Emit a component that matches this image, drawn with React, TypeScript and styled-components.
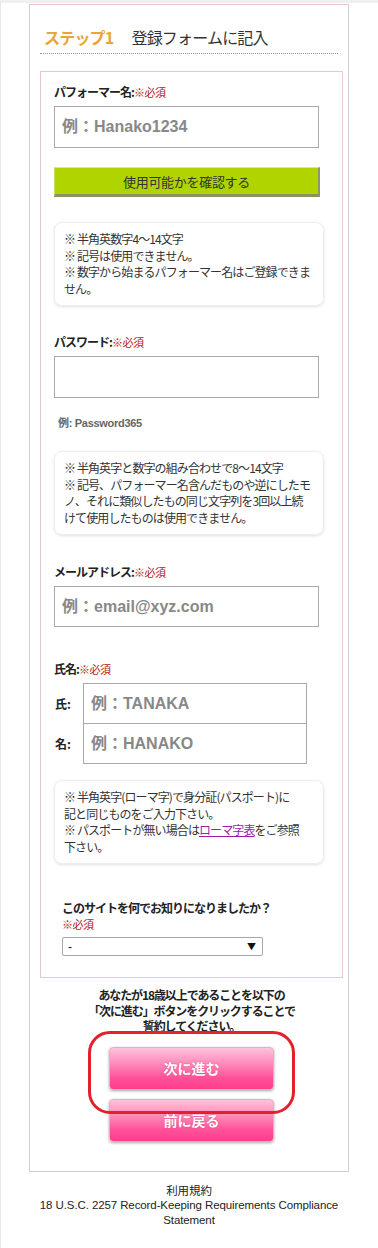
import React from 'react';
import styled, { createGlobalStyle } from 'styled-components';

const JP = `"Noto Sans CJK JP", "Noto Sans", sans-serif`;
const LATIN_JP = `"Liberation Sans", "Noto Sans CJK JP", sans-serif`;

const GlobalStyle = createGlobalStyle`
  html, body {
    margin: 0;
    padding: 0;
    background: #fff;
  }
  body {
    font-family: ${JP};
    color: #222;
  }
  * {
    box-sizing: border-box;
  }
`;

const Page = styled.div`
  width: 378px;
  min-height: 1248px;
  border-top: 3px solid #f0f0f0;
  border-left: 1px solid #e8e8e8;
  padding-left: 28px;
`;

const Card = styled.section`
  margin-top: 1px;
  width: 320px;
  border: 1px solid #cfcfcf;
  border-top-color: #e6c3d6;
  padding: 0 5px 29px 10px;
`;

const Heading = styled.h1`
  margin: 0;
  padding: 22px 0 6px 4px;
  display: flex;
  gap: 18px;
  font-size: 16px;
  line-height: 20px;
  font-weight: normal;
  letter-spacing: -0.8px;
  color: #333;
  border-bottom: 1px dotted #999;
  width: 298px;
`;

const Step = styled.span`
  color: #eba43a;
  font-weight: bold;
`;

const FormBox = styled.div`
  margin-top: 17px;
  width: 303px;
  border: 1px solid #e8c6d8;
  padding: 12px 0 21px 13px;
`;

const Field = styled.div<{ $gap?: number }>`
  margin-top: ${p => p.$gap ?? 0}px;
`;

const Label = styled.div`
  font-size: 12px;
  line-height: 16px;
  font-weight: bold;
  letter-spacing: -1px;
  color: #222;
`;

const Required = styled.span`
  font-size: 11px;
  font-weight: normal;
  letter-spacing: -0.5px;
  color: #b81818;
`;

const TextInput = styled.input<{ $width?: number; $height?: number }>`
  display: block;
  width: ${p => p.$width ?? 265}px;
  height: ${p => p.$height ?? 42}px;
  margin: 0;
  border: 1px solid #aaa;
  border-radius: 0;
  padding: 0 7px;
  font-family: ${LATIN_JP};
  font-size: 16px;
  font-weight: bold;
  color: #333;
  outline: none;
  &::placeholder {
    color: #888;
  }
`;

const InputWrap = styled.div`
  margin-top: 6px;
`;

const CheckButton = styled.button`
  display: block;
  margin-top: 19px;
  width: 266px;
  height: 30px;
  background: #b0d400;
  border: none;
  border-top: 1px solid #d6e98c;
  border-left: 1px solid #c8df6a;
  border-right: 2px solid #8d9868;
  border-bottom: 3px solid #8a9360;
  font-family: ${JP};
  font-size: 13px;
  color: #333;
  padding: 0;
  letter-spacing: -0.3px;
`;

const Note = styled.div<{ $gap: number }>`
  margin-top: ${p => p.$gap}px;
  width: 270px;
  border: 1px solid #eee;
  border-radius: 8px;
  box-shadow: 0 1px 3px rgba(0, 0, 0, 0.12);
  padding: 8px 4px 8px 9px;
  font-size: 12px;
  line-height: 16.5px;
  letter-spacing: -0.9px;
  color: #333;
  white-space: nowrap;
`;

const Link = styled.a`
  color: #a21aa8;
  text-decoration: underline;
`;

const Example = styled.div`
  margin: 18px 0 0 4px;
  font-family: ${LATIN_JP};
  font-size: 11px;
  line-height: 14px;
  font-weight: bold;
  color: #666;
  letter-spacing: -0.3px;
`;

const NameRows = styled.div`
  margin-top: 6px;
  display: flex;
  flex-direction: column;
`;

const NameRow = styled.div<{ $first?: boolean }>`
  display: flex;
  align-items: center;
  margin-top: ${p => (p.$first ? 0 : -1)}px;
`;

const NameLabel = styled.span`
  width: 29px;
  padding-left: 1px;
  font-size: 12px;
  font-weight: bold;
  color: #222;
`;

const Question = styled.div`
  margin: 36px 0 0 8px;
`;

const SelectBox = styled.div`
  margin-top: 5px;
  width: 201px;
  height: 19px;
  display: flex;
  align-items: center;
  border: 1px solid #a6a6a6;
  border-radius: 2px;
  background: #fff;
`;

const Select = styled.select`
  flex: 1;
  appearance: none;
  border: none;
  background: transparent;
  font-family: ${LATIN_JP};
  font-size: 12px;
  padding: 0 0 0 5px;
  height: 17px;
  color: #111;
  outline: none;
`;

const Arrow = styled.span`
  width: 15px;
  font-size: 9px;
  color: #111;
  text-align: left;
`;

const Pledge = styled.p`
  margin: 9px 0 0;
  width: 303px;
  text-align: center;
  font-size: 12px;
  line-height: 15.5px;
  font-weight: bold;
  letter-spacing: -1.1px;
  color: #222;
`;

const Buttons = styled.div`
  margin-top: 13px;
  width: 303px;
  display: flex;
  flex-direction: column;
  align-items: center;
  gap: 9px;
`;

const Highlight = styled.div`
  position: relative;
`;

const Ring = styled.div`
  position: absolute;
  left: -21px;
  top: -16px;
  width: 207px;
  height: 83px;
  border: 3px solid #e3212b;
  border-radius: 22px;
  pointer-events: none;
`;

const PinkButton = styled.button`
  display: block;
  width: 165px;
  height: 43px;
  border: 1px solid #f5a7c8;
  border-radius: 4px;
  background: linear-gradient(#ffc2dc 0%, #ff8fbd 35%, #ff4f98 75%, #ff3d8b 100%);
  box-shadow: 0 1px 3px rgba(0, 0, 0, 0.35);
  font-family: ${JP};
  font-size: 14px;
  font-weight: bold;
  color: #fff;
  text-shadow: 0 0 2px rgba(200, 40, 100, 0.6);
  padding: 0;
`;

const Footer = styled.footer`
  margin-top: 12px;
  width: 320px;
  text-align: center;
  font-family: ${LATIN_JP};
  font-size: 11.5px;
  line-height: 14.5px;
  letter-spacing: -0.1px;
  color: #222;
`;

export default function App() {
  return (
    <>
      <GlobalStyle />
      <Page>
        <Card>
          <Heading>
            <Step>ステップ1</Step>
            <span>登録フォームに記入</span>
          </Heading>

          <FormBox>
            <Field>
              <Label>
                パフォーマー名:<Required>※必須</Required>
              </Label>
              <InputWrap>
                <TextInput placeholder="例：Hanako1234" />
              </InputWrap>
              <CheckButton type="button">使用可能かを確認する</CheckButton>
              <Note $gap={25}>
                ※ 半角英数字4～14文字
                <br />
                ※ 記号は使用できません。
                <br />
                ※ 数字から始まるパフォーマー名はご登録できま
                <br />
                せん。
              </Note>
            </Field>

            <Field $gap={28}>
              <Label>
                パスワード:<Required>※必須</Required>
              </Label>
              <InputWrap>
                <TextInput type="text" />
              </InputWrap>
              <Example>例: Password365</Example>
              <Note $gap={21}>
                ※ 半角英字と数字の組み合わせで8～14文字
                <br />
                ※ 記号、パフォーマー名含んだものや逆にしたモ
                <br />
                ノ、それに類似したもの同じ文字列を3回以上続
                <br />
                けて使用したものは使用できません。
              </Note>
            </Field>

            <Field $gap={29}>
              <Label>
                メールアドレス:<Required>※必須</Required>
              </Label>
              <InputWrap>
                <TextInput $height={41} placeholder="例：email@xyz.com" />
              </InputWrap>
            </Field>

            <Field $gap={34}>
              <Label>
                氏名:<Required>※必須</Required>
              </Label>
              <NameRows>
                <NameRow $first>
                  <NameLabel>氏:</NameLabel>
                  <TextInput $width={224} $height={41} placeholder="例：TANAKA" />
                </NameRow>
                <NameRow>
                  <NameLabel>名:</NameLabel>
                  <TextInput $width={224} $height={41} placeholder="例：HANAKO" />
                </NameRow>
              </NameRows>
              <Note $gap={16}>
                ※ 半角英字(ローマ字)で身分証(パスポート)に
                <br />
                記と同じものをご入力下さい。
                <br />
                ※ パスポートが無い場合は<Link href="#">ローマ字表</Link>をご参照
                <br />
                下さい。
              </Note>
            </Field>

            <Question>
              <Label>このサイトを何でお知りになりましたか？</Label>
              <Label>
                <Required>※必須</Required>
              </Label>
              <SelectBox>
                <Select defaultValue="-">
                  <option value="-">-</option>
                </Select>
                <Arrow>▼</Arrow>
              </SelectBox>
            </Question>
          </FormBox>

          <Pledge>
            あなたが18歳以上であることを以下の
            <br />
            「次に進む」ボタンをクリックすることで
            <br />
            誓約してください。
          </Pledge>

          <Buttons>
            <Highlight>
              <PinkButton type="button">次に進む</PinkButton>
              <Ring />
            </Highlight>
            <PinkButton type="button">前に戻る</PinkButton>
          </Buttons>
        </Card>

        <Footer>
          利用規約
          <br />
          18 U.S.C. 2257 Record-Keeping Requirements Compliance
          <br />
          Statement
        </Footer>
      </Page>
    </>
  );
}
